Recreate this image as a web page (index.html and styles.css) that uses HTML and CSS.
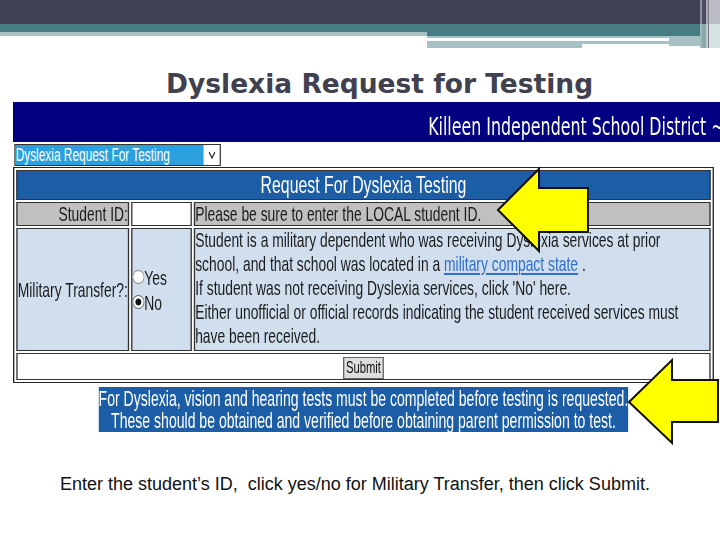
FILE: index.html
```html
<!DOCTYPE html>
<html lang="en">
<head>
<meta charset="utf-8">
<title>Dyslexia Request for Testing</title>
<link rel="stylesheet" href="styles.css">
</head>
<body>
<div class="slide">
  <div class="deco">
    <div class="deco-main">
      <div class="band-dark"></div>
      <div class="band-teal"></div>
      <div class="band-split">
        <div class="split-left"></div>
        <div class="split-right">
          <div class="split-teal"></div>
          <div class="split-lines">
            <div class="lines">
              <div class="line-a"></div>
              <div class="line-white"></div>
              <div class="line-b"></div>
              <div class="line-c"></div>
            </div>
            <div class="line-end"></div>
          </div>
        </div>
      </div>
    </div>
    <div class="deco-edge">
      <div class="edge e1"></div>
      <div class="edge e2"></div>
      <div class="edge e3"></div>
      <div class="edge e4"></div>
      <div class="edge e5"></div>
    </div>
  </div>

  <h1 class="title">Dyslexia Request for Testing</h1>

  <div class="shot-clip">
    <div class="shot">
      <div class="site-bar"><span class="site-name">Killeen Independent School District ~</span></div>
      <div class="picker-row">
        <div class="picker">
          <span class="picker-value">Dyslexia Request For Testing</span>
          <span class="picker-btn"><svg width="11" height="8" viewBox="0 0 11 8"><polyline points="1,1 5.5,7 10,1" fill="none" stroke="#222" stroke-width="1.6"/></svg></span>
        </div>
      </div>
      <table class="form">
        <colgroup><col class="c-label"><col class="c-input"><col></colgroup>
        <tr><th class="form-head" colspan="3">Request For Dyslexia Testing</th></tr>
        <tr class="row-id">
          <td class="label">Student ID:</td>
          <td class="field"></td>
          <td class="info">Please be sure to enter the LOCAL student ID.</td>
        </tr>
        <tr class="row-mil">
          <td class="label">Military Transfer?:</td>
          <td class="opts">
            <div class="opt"><span class="radio"></span>Yes</div>
            <div class="opt"><span class="radio on"></span>No</div>
          </td>
          <td class="info long"><div class="long-text">Student is a military dependent who was receiving Dyslexia services at prior<br>school, and that school was located in a <span class="link">military compact state</span> .<br>If student was not receiving Dyslexia services, click 'No' here.<br>Either unofficial or official records indicating the student received services must<br>have been received.</div></td>
        </tr>
        <tr class="row-submit">
          <td colspan="3" class="submit-cell"><span class="btn">Submit</span></td>
        </tr>
      </table>
      <div class="note">For Dyslexia, vision and hearing tests must be completed before testing is requested.<br>These should be obtained and verified before obtaining parent permission to test.</div>
    </div>
  </div>

  <p class="caption">Enter the student’s ID,&nbsp; click yes/no for Military Transfer, then click Submit.</p>

  <svg class="arrow arrow-id" width="110" height="100" viewBox="0 0 110 100"><polygon points="8,50 49,9 49,28 98,28 98,72 49,72 49,91" fill="#ffff00" stroke="#111" stroke-width="2" stroke-linejoin="miter"/></svg>
  <svg class="arrow arrow-note" width="100" height="100" viewBox="0 0 100 100"><polygon points="9,52 52,10 52,30 98,30 98,72 52,72 52,93" fill="#ffff00" stroke="#111" stroke-width="2" stroke-linejoin="miter"/></svg>
</div>
</body>
</html>
```
FILE: styles.css
```css
body { margin: 0; background: #fff; overflow: hidden; }
.slide { position: relative; width: 720px; height: 540px; overflow: hidden; background: #fff; }

/* top decoration */
.deco { display: flex; height: 49px; }
.deco-main { width: 700px; display: flex; flex-direction: column; }
.band-dark { height: 24px; background: #414155; }
.band-teal { height: 8px; background: #467d82; }
.band-split { display: flex; }
.split-left { width: 427px; height: 4px; background: #a7c0c3; }
.split-right { flex: 1; display: flex; flex-direction: column; }
.split-teal { height: 4px; background: #467d82; }
.split-lines { display: flex; }
.lines { width: 242px; display: flex; flex-direction: column; }
.line-a { height: 2px; background: #a7c0c3; }
.line-white { height: 3px; background: #fff; }
.line-b { height: 3px; background: #a7c0c3; }
.line-c { height: 4px; width: 155px; background: #a7c0c3; }
.line-end { width: 31px; height: 10px; background: #a7c0c3; }
.deco-edge { width: 20px; display: flex; }
.edge { height: 48px; }
.e1 { width: 2px; background: linear-gradient(#8e8ea0 0 24px, #9fb9bc 24px 100%); }
.e2 { width: 4px; background: linear-gradient(#4d4d62 0 24px, #8aa7ab 24px 100%); }
.e3 { width: 2px; background: linear-gradient(#a8a8b6 0 24px, #b7cdd0 24px 100%); }
.e4 { width: 1px; background: #7a7a88; }
.e5 { flex: 1; background: linear-gradient(#bcbcc5 0 24px, #d4e2e4 24px 100%); }

/* slide title */
.title {
  margin: 20px 0 3px;
  padding-left: 166px;
  font: bold 26.5px/30px "DejaVu Sans", Verdana, sans-serif;
  color: #40404f;
  white-space: nowrap;
}

/* squeezed screenshot */
.shot-clip { margin-left: 13px; width: 707px; overflow: hidden; }
.shot {
  width: 1062px;
  transform: scaleX(0.66);
  transform-origin: 0 0;
  font-family: "Liberation Sans", Arial, sans-serif;
}
.site-bar {
  width: 1075px;
  height: 40px;
  box-sizing: border-box;
  padding: 12px 0 0 629px;
  background: #000080;
  white-space: nowrap;
  overflow: hidden;
}
.site-name { font: 24px/26px "DejaVu Sans", Verdana, sans-serif; color: #fff; }

.picker-row { padding: 2px 0 1px 2px; }
.picker {
  display: flex;
  width: 313px;
  height: 22px;
  box-sizing: border-box;
  border: 1px solid #333;
  border-left-width: 2px;
  border-right-width: 2px;
}
.picker-value {
  flex: 1;
  background: #2ba0dc;
  color: #fff;
  font-size: 18px;
  line-height: 20px;
  padding-left: 0;
  white-space: nowrap;
}
.picker-btn { width: 24px; background: #fff; display: flex; align-items: center; justify-content: center; }

.form {
  width: 1062px;
  table-layout: fixed;
  border-collapse: separate;
  border-spacing: 3px 2px;
  border: 1px solid #222;
  border-left-width: 2px;
  border-right-width: 2px;
  font-size: 21px;
  color: #1c1c1c;
}
.c-label { width: 171px; }
.c-input { width: 92px; }
.form th, .form td {
  border: 1px solid #333;
  border-left-width: 2px;
  border-right-width: 2px;
  padding: 0;
  font-weight: normal;
}
.form-head {
  height: 28px;
  background: #1b5ea7;
  color: #fff;
  font-size: 24px;
  line-height: 28px;
  text-align: center;
}
.row-id td { height: 22px; line-height: 22px; background: #c0c0c0; }
.row-id .field { background: #fff; }
.label { text-align: right; padding-right: 3px; white-space: nowrap; }
.info { padding-left: 1px; white-space: nowrap; }
.row-mil td { height: 121px; background: #d0deee; vertical-align: middle; }
.row-mil .info.long { vertical-align: top; line-height: 24px; }
.long-text { margin-top: -1px; }
.link { color: #2f6fd0; text-decoration: underline; }
.opt { display: flex; align-items: center; line-height: 25px; }
.radio {
  width: 18px;
  height: 14px;
  box-sizing: border-box;
  border: 1px solid #888;
  border-radius: 50%;
  background: #fff;
}
.radio.on { background: radial-gradient(closest-side, #111 0 50%, #fff 64%); border-color: #666; }

.row-submit td { height: 22px; background: #fff; text-align: center; vertical-align: middle; }
.btn {
  display: inline-block;
  height: 22px;
  box-sizing: border-box;
  padding: 0 3px;
  border: 1px solid #666;
  border-left-width: 2px;
  border-right-width: 2px;
  background: #dedede;
  color: #111;
  font-size: 17px;
  line-height: 20px;
}

.note {
  width: fit-content;
  margin: 4px auto 0;
  padding: 1px 0 0;
  background: #1b5ea7;
  color: #fff;
  font-size: 21.3px;
  line-height: 22px;
  text-align: center;
  white-space: nowrap;
}

.caption {
  margin: 42px 0 0;
  padding-left: 60px;
  font: 18px/20px "Liberation Sans", Arial, sans-serif;
  color: #111;
  white-space: nowrap;
}

.arrow { position: absolute; }
.arrow-id { left: 490px; top: 160px; }
.arrow-note { left: 620px; top: 350px; }
```
